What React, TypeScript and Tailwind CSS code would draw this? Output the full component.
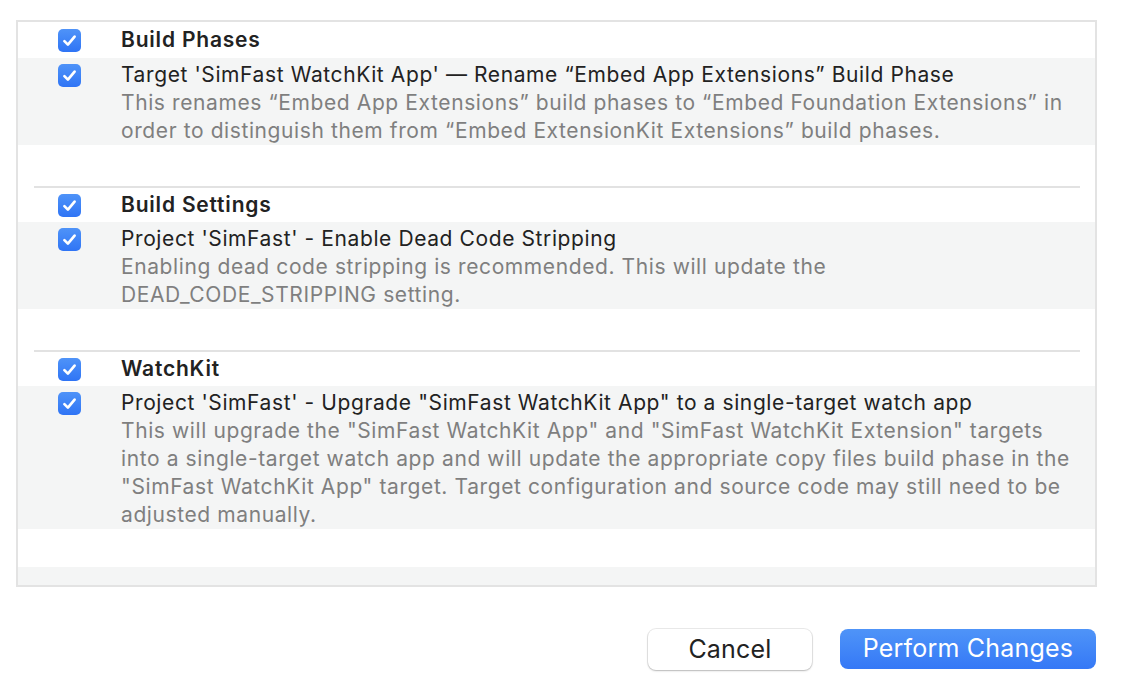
import React from "react";

const Check = () => (
  <div className="w-[23px] h-[23px] rounded-[5px] bg-gradient-to-b from-[#4f93f8] to-[#2f74f5] flex items-center justify-center shrink-0">
    <svg width="17" height="17" viewBox="0 0 16 16" fill="none">
      <path d="M3.2 8.6 L6.5 11.9 L12.8 4.3" stroke="white" strokeWidth="2.5" strokeLinecap="round" strokeLinejoin="round" />
    </svg>
  </div>
);

type Section = {
  header: string;
  title: string;
  desc: string[];
  first?: boolean;
};

const sections: Section[] = [
  {
    header: "Build Phases",
    title: "Target 'SimFast WatchKit App' \u2014 Rename \u201cEmbed App Extensions\u201d Build Phase",
    desc: [
      "This renames \u201cEmbed App Extensions\u201d build phases to \u201cEmbed Foundation Extensions\u201d in",
      "order to distinguish them from \u201cEmbed ExtensionKit Extensions\u201d build phases.",
    ],
    first: true,
  },
  {
    header: "Build Settings",
    title: "Project 'SimFast' - Enable Dead Code Stripping",
    desc: [
      "Enabling dead code stripping is recommended. This will update the",
      "DEAD_CODE_STRIPPING setting.",
    ],
  },
  {
    header: "WatchKit",
    title: "Project 'SimFast' - Upgrade \"SimFast WatchKit App\" to a single-target watch app",
    desc: [
      "This will upgrade the \"SimFast WatchKit App\" and \"SimFast WatchKit Extension\" targets",
      "into a single-target watch app and will update the appropriate copy files build phase in the",
      "\"SimFast WatchKit App\" target. Target configuration and source code may still need to be",
      "adjusted manually.",
    ],
  },
];

export default function App() {
  return (
    <div
      className="w-[1122px] h-[688px] bg-white relative overflow-hidden"
      style={{ fontFamily: "Inter, 'Liberation Sans', sans-serif" }}
    >
      <div className="pt-[20px] pl-[16px]">
        <div className="w-[1081px] h-[567px] border-2 border-[#e3e3e3] flex flex-col overflow-hidden">
          {sections.map((s, i) => (
            <div key={i} className="flex flex-col">
              {!s.first && <div className="ml-[16px] mr-[15px] h-[2px] bg-[#e2e2e2]" />}
              <div className={`flex items-center ${s.first ? "h-[36px]" : "h-[34px]"}`}>
                <div className="w-[40px] ml-[40px] flex">
                  <Check />
                </div>
                <div className="ml-[23px] text-[21px] tracking-[0.8px] font-semibold text-[#222]">{s.header}</div>
              </div>
              <div className="bg-[#f4f5f5] pt-[3px] flex">
                <div className="w-[40px] ml-[40px] pt-[3px]">
                  <Check />
                </div>
                <div className="ml-[23px] text-[21px] tracking-[0.6px] leading-[28px] whitespace-nowrap">
                  <div className="text-[#222]">{s.title}</div>
                  {s.desc.map((d, j) => (
                    <div key={j} className="text-[#7f7f7f]">{d}</div>
                  ))}
                </div>
              </div>
              <div className={i === 2 ? "h-[38px]" : "h-[41px]"} />
            </div>
          ))}
          <div className="bg-[#f4f5f5] flex-1" />
        </div>
      </div>
      <div className="flex justify-end gap-[28px] pr-[26px] mt-[42px]">
        <button className="w-[164px] h-[41px] rounded-[8px] bg-white shadow-[0_0_0_1px_rgba(0,0,0,0.08),0_1px_2px_rgba(0,0,0,0.22)] text-[25px] tracking-[0.2px] text-[#222]">
          Cancel
        </button>
        <button className="w-[256px] h-[40px] rounded-[8px] bg-gradient-to-b from-[#4f94f8] to-[#3578f6] text-[25px] tracking-[0.2px] text-white">
          Perform Changes
        </button>
      </div>
    </div>
  );
}
